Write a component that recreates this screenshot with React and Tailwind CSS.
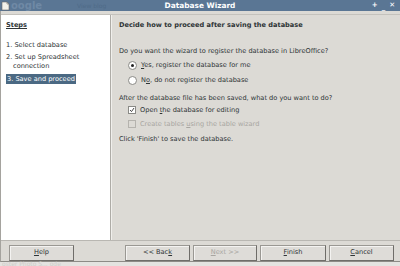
import React from "react";

function Radio({ checked }) {
  return (
    <span className="w-[9px] h-[9px] rounded-full border border-[#8a8a86] bg-white flex items-center justify-center shrink-0">
      {checked && <span className="w-[3px] h-[3px] rounded-full bg-[#222]" />}
    </span>
  );
}

function Check({ checked, disabled }) {
  return (
    <span
      className={
        "w-[8px] h-[8px] border flex items-center justify-center shrink-0 " +
        (disabled ? "border-[#b5b3ae] bg-[#dcdad5]" : "border-[#8a8a86] bg-white")
      }
    >
      {checked && (
        <svg width="6" height="6" viewBox="0 0 6 6">
          <path d="M1 3 L2.5 4.6 L5 1" stroke="#333" strokeWidth="0.9" fill="none" />
        </svg>
      )}
    </span>
  );
}

function Btn({ children, disabled, className = "" }) {
  return (
    <div
      className={
        "h-[16px] flex items-center justify-center border border-[#9a9893] border-r-[#6f6d69] border-b-[#6f6d69] bg-[#dedcd8] shadow-[inset_1px_1px_0_#f4f3f1] " +
        (disabled ? "text-[#a8a6a1] " : "text-[#2e3436] ") +
        className
      }
    >
      {children}
    </div>
  );
}

export default function App() {
  return (
    <div
      className="w-[400px] h-[266px] bg-[#e4e3e0] flex flex-col text-[6.6px] text-[#2e3436] overflow-hidden"
      style={{ fontFamily: '"DejaVu Sans", sans-serif' }}
    >
      {/* title bar */}
      <div className="h-[11px] bg-[#5a7694] flex items-center relative shrink-0">
        <svg width="9" height="10" viewBox="0 0 9 10" className="ml-[1px]">
          <path d="M1 1 H6 L8 3 V9 H1 Z" fill="#f3f1ea" stroke="#6a6a6a" strokeWidth="0.6" />
          <path d="M6 1 V3 H8" fill="none" stroke="#6a6a6a" strokeWidth="0.6" />
        </svg>
        <span className="ml-[1px] text-[10px] text-[#6f89a5] font-bold leading-none">oogle</span>
        <span className="ml-[35px] text-[6px] text-[#4f6b88] leading-none">View blog</span>
        <span className="absolute left-0 right-0 text-center text-white font-bold text-[7.4px] leading-none">
          Database Wizard
        </span>
        <div className="ml-auto mr-[5px] flex items-center gap-[4px] text-white text-[7px] font-bold leading-none">
          <span>+</span>
          <span className="mt-[3px]">_</span>
          <span>✕</span>
        </div>
      </div>

      {/* window */}
      <div className="flex flex-col h-[251px] bg-[#dcdad5] border-l border-[#a5a39e] border-b border-b-[#8d8b86]">
        <div className="flex flex-1 mt-[3px] border-t border-[#c4c2bd]">
          {/* steps */}
          <div className="w-[110px] bg-white border-r border-[#aeaca7] pl-[5px] pt-[5px]">
            <div className="font-bold underline underline-offset-1 leading-[10px]">Steps</div>
            <div className="mt-[10px] leading-[10px]">1. Select database</div>
            <div className="mt-[3px] leading-[9px]">2. Set up Spreadsheet</div>
            <div className="pl-[7px] leading-[9px]">connection</div>
            <div className="mt-[3px] leading-[10px]">
              <span className="bg-[#4b6983] text-white px-[1px] py-[1px]">3. Save and proceed</span>
            </div>
          </div>

          {/* page */}
          <div className="flex-1 pl-[7px] pt-[5px] border-l border-[#f0efec]">
            <div className="font-bold leading-[10px]">Decide how to proceed after saving the database</div>
            <div className="mt-[16px] leading-[10px]">Do you want the wizard to register the database in LibreOffice?</div>
            <div className="mt-[4px] ml-[9px] flex items-center gap-[4px] leading-[10px]">
              <Radio checked />
              <span>
                <u>Y</u>es, register the database for me
              </span>
            </div>
            <div className="mt-[5px] ml-[9px] flex items-center gap-[4px] leading-[10px]">
              <Radio />
              <span>
                N<u>o</u>, do not register the database
              </span>
            </div>
            <div className="mt-[8px] leading-[10px]">After the database file has been saved, what do you want to do?</div>
            <div className="mt-[2px] ml-[9px] flex items-center gap-[4px] leading-[10px]">
              <Check checked />
              <span>
                Open <u>t</u>he database for editing
              </span>
            </div>
            <div className="mt-[4px] ml-[9px] flex items-center gap-[4px] leading-[10px] text-[#a8a6a1]">
              <Check disabled />
              <span>
                Create tables <u>u</u>sing the table wizard
              </span>
            </div>
            <div className="mt-[5px] leading-[10px]">Click 'Finish' to save the database.</div>
          </div>
        </div>

        {/* buttons */}
        <div className="h-[21px] shrink-0 border-t border-[#b9b7b2] flex items-start pt-[4px] pl-[8px] pr-[6px]">
          <Btn className="w-[65px]">
            <span>
              <u>H</u>elp
            </span>
          </Btn>
          <Btn className="w-[65px] ml-auto">
            <span>
              &lt;&lt; Bac<u>k</u>
            </span>
          </Btn>
          <Btn disabled className="w-[64px] ml-[3px]">
            <span>
              <u>N</u>ext &gt;&gt;
            </span>
          </Btn>
          <Btn className="w-[66px] ml-[3px] border-[#3f3f3f]">
            <span>
              <u>F</u>inish
            </span>
          </Btn>
          <Btn className="w-[65px] ml-[3px]">
            <span>
              <u>C</u>ancel
            </span>
          </Btn>
        </div>
      </div>
      <div className="text-[6px] text-[#cfcdc9] pl-[2px] leading-[4px]">oster Photo S... ode</div>
    </div>
  );
}
